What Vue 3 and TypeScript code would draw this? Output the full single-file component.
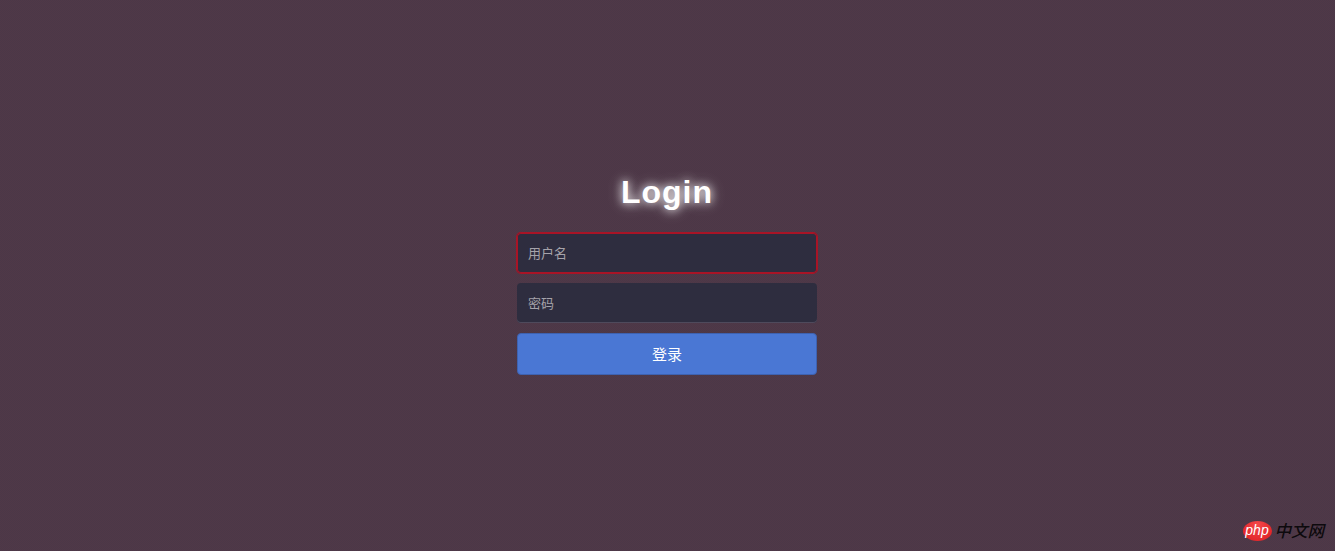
<script setup lang="ts">
const title: string = 'Login'
</script>

<template>
  <main class="page">
    <form class="login" @submit.prevent>
      <h1 class="title">{{ title }}</h1>
      <input class="field field-focus" type="text" placeholder="用户名" />
      <input class="field" type="password" placeholder="密码" />
      <button class="submit" type="submit">登录</button>
    </form>
    <div class="mark">
      <span class="oval">php</span>
      <span class="cn">中文网</span>
    </div>
  </main>
</template>

<style>
html, body { margin: 0; background: #4c3849; }
</style>

<style scoped>
.page {
  position: relative;
  box-sizing: border-box;
  height: 551px;
  padding-top: 173px;
  padding-right: 1px;
  display: flex;
  justify-content: center;
  align-items: flex-start;
  overflow: hidden;
  background: repeating-conic-gradient(#513847 0 25%, #4a3848 0 50%) 0 0 / 2px 2px;
  font-family: "Liberation Sans", "Noto Sans CJK SC", sans-serif;
}
.login {
  width: 300px;
  display: flex;
  flex-direction: column;
}
.title {
  margin: 0 0 21px;
  height: 39px;
  line-height: 39px;
  font-size: 32px;
  font-weight: 700;
  letter-spacing: 1px;
  text-align: center;
  color: #fff;
  text-shadow: 0 0 10px #fff, 0 0 16px rgba(255, 255, 255, 0.45);
}
.field {
  box-sizing: border-box;
  width: 300px;
  height: 40px;
  margin-bottom: 10px;
  padding: 10px 11px;
  border: 0;
  border-radius: 4px;
  outline: none;
  background: #2e2d3f;
  color: #eee;
  font: 13px "Liberation Sans", "Noto Sans CJK SC", sans-serif;
  box-shadow: inset 0 -1px 0 #4f4a5c;
}
.field-focus {
  box-shadow: 0 0 0 1px #a81426, inset 0 0 0 1px #a81426;
}
.field::placeholder {
  color: #a5a3aa;
  opacity: 1;
}
.submit {
  box-sizing: border-box;
  width: 300px;
  height: 42px;
  padding: 0 0 2px;
  border: 1px solid #3e62b0;
  border-radius: 4px;
  background: #4a77d4;
  color: #fff;
  font: 15px "Liberation Sans", "Noto Sans CJK SC", sans-serif;
}
.mark {
  position: absolute;
  right: 11px;
  bottom: 10px;
  display: flex;
  align-items: center;
  gap: 3px;
}
.oval {
  width: 29px;
  height: 20px;
  border-radius: 50%;
  background: radial-gradient(ellipse at 50% 20%, #f4474a, #dc1c20);
  color: #fff;
  font: italic 400 14px/18px "Liberation Sans", sans-serif;
  text-align: center;
}
.cn {
  color: #0d0a0d;
  font-size: 16.5px;
  line-height: 20px;
  font-style: italic;
  font-weight: 500;
}
</style>
